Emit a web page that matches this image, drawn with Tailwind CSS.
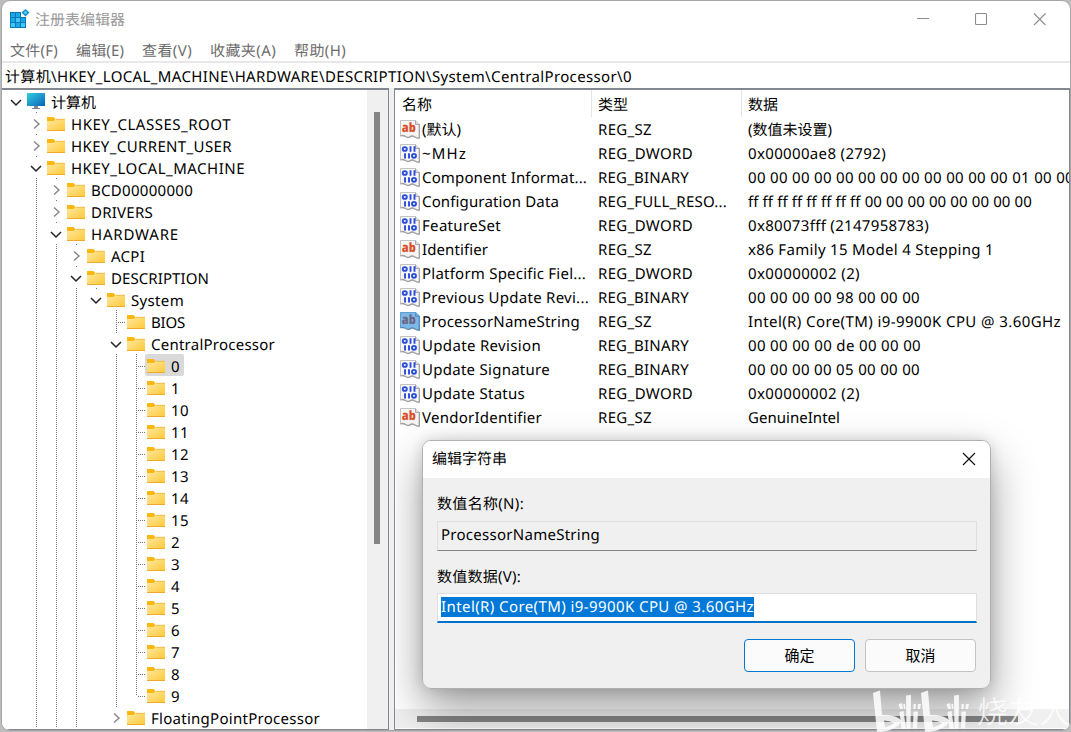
<!DOCTYPE html>
<html lang="zh-CN">
<head>
<meta charset="utf-8">
<title>注册表编辑器</title>
<script src="https://cdn.jsdelivr.net/npm/@tailwindcss/browser@4"></script>
</head>
<body class="w-[1071px] h-[732px] overflow-hidden bg-[#bcbcbd] font-['Noto_Sans','Noto_Sans_CJK_SC',sans-serif] text-[15px] leading-[22px] text-black [text-rendering:geometricPrecision]">
<svg class="absolute h-0 w-0">
  <defs>
    <linearGradient id="gf" x1="0" y1="0" x2="1" y2="1"><stop offset="0" stop-color="#ffe8a0"/><stop offset="1" stop-color="#ffc938"/></linearGradient>
    <linearGradient id="gm" x1="0" y1="0" x2="1" y2="1"><stop offset="0" stop-color="#32cfe0"/><stop offset="1" stop-color="#0b63b8"/></linearGradient>
  </defs>
  <symbol id="folder" viewBox="0 0 18 14"><path d="M0 0H6.500L8.500 2V4H0Z" fill="#fbb813"/><path d="M0 4H6.500L9 2H18V14H0Z" fill="url(#gf)"/><path d="M9 2.300H18" stroke="#edb53a" stroke-width=".8"/><path d="M0 13.500H18" stroke="#efac2c"/></symbol>
  <symbol id="page" viewBox="0 0 20 20"><path d="M.5 1.500H15.500L19.500 5.500V19.300Q16.500 19.500 14.500 17.800Q12 16 9.500 18.200Q7.500 19 5.500 17.500Q3 16 .5 16.800Z" fill="#f6f6f7" stroke="#c4c4c4"/><path d="M15.500 1.500V5.500H19.500" fill="#ddd" stroke="#aaa"/><path d="M19.300 5V19Q16.500 19.300 14.500 17.700Q12 16 9.500 18.200Q7.500 19 5.500 17.500Q3 16 .5 16.800" fill="none" stroke="#a2a2a2" stroke-width="1.300"/></symbol>
</svg>
<main class="relative ml-px flex h-[731px] w-[1070px] flex-col overflow-hidden rounded-[9px] border border-[#a6a6a6] bg-white">
  <header class="flex h-[36px] shrink-0 items-center pl-[8px]">
    <svg class="h-5 w-5" viewBox="0 0 20 20"><path d="M0 3H11V8H16V19H0Z" fill="#0879b9"/><g fill="#19a8e6"><path d="M1 4H5V8H1ZM6 4H10V8H6ZM1 9H5V13H1ZM11 9H15V13H11ZM6 14H10V18H6Z"/></g><g fill="#43c6f2"><path d="M6 9H10V13H6ZM1 14H5V18H1ZM11 14H15V18H11Z"/></g><path d="M15.500 0L19.500 3.500L15.500 7.500L11.500 3.500Z" fill="#1390cd"/><path d="M15.500 1.500L17.500 3.500L15.500 5.500L13.500 3.500Z" fill="#51c8f0"/></svg>
    <h1 class="mt-[2px] ml-[5px] text-[#999]">注册表编辑器</h1>
    <svg class="ml-auto mr-[22px] h-[14px] w-[132px]" viewBox="0 0 132 14" fill="none" stroke="#8c8c8c" stroke-width="1.100"><path d="M1 6.500H13"/><rect x="59.500" y="1.500" width="11" height="11" rx="1"/><path d="M118 1.500L129.500 13M129.500 1.500L118 13"/></svg>
  </header>
  <nav class="flex h-6 shrink-0 items-center gap-[18px] pt-[4px] pl-[8px] text-[#6d6d6d]">
    <span data-w="48">文件(F)</span><span data-w="48">编辑(E)</span><span data-w="50">查看(V)</span><span data-w="66">收藏夹(A)</span><span data-w="52">帮助(H)</span>
  </nav>
  <div class="flex h-[27px] shrink-0 items-center border-t-2 border-[#e8e8e8] pt-[2px] pl-[3px]"><span data-w="627">计算机\HKEY_LOCAL_MACHINE\HARDWARE\DESCRIPTION\System\CentralProcessor\0</span></div>
  <div class="flex min-h-0 flex-1 bg-[#f0f0f0]">
    <section class="flex w-[387px] shrink-0 overflow-hidden border-t-2 border-r border-b border-[#828790] bg-white">
      <div id="tree" class="h-[638px] w-[365px] overflow-hidden"></div>
      <div class="w-[21px] bg-[#f0f0f0] pt-[22px] pl-[7px]"><div class="h-[432px] w-[6px] bg-[#858585]"></div></div>
    </section>
    <section class="ml-[5px] flex min-w-0 flex-1 flex-col overflow-hidden border-t-2 border-r border-b border-l border-[#828790] bg-white">
      <div class="flex h-[27px] shrink-0 items-center">
        <div class="h-full w-[197px] border-r border-[#e5e5e5] pl-[7px] leading-[30px]">名称</div>
        <div class="h-full w-[150px] border-r border-[#e5e5e5] pl-[6px] leading-[30px]">类型</div>
        <div class="h-full pl-[6px] leading-[30px]">数据</div>
      </div>
      <div id="list" class="min-h-0 flex-1"></div>
      <div class="mb-[1px] h-[19px] shrink-0 bg-[#f0f0f0] pt-[7px] pl-[22px]"><div class="h-[6px] w-[601px] bg-[#858585]"></div></div>
    </section>
  </div>

  <div class="absolute left-[420px] top-[439px] z-10 flex h-[249px] w-[569px] flex-col overflow-hidden rounded-[9px] border border-[#b0b0b0] bg-[#f0f0f0]">
    <div class="flex h-[37px] shrink-0 items-center justify-between bg-white pr-[14px] pb-px pl-[9px]"><h2>编辑字符串</h2>
      <svg class="h-[14px] w-[14px]" viewBox="0 0 14 14" stroke="#111" stroke-width="1.200"><path d="M1 1L13 13M13 1L1 13"/></svg></div>
    <div class="flex flex-1 flex-col pr-[13px] pl-[14px]">
      <label class="mt-[15px] h-[22px] leading-[22px]"><span data-w="87">数值名称(N):</span></label>
      <div class="mt-[6px] flex h-[30px] items-center border border-b-[#868686] border-[#dfdfdf] pb-[2px] pl-[3px]"><span data-w="159">ProcessorNameString</span></div>
      <label class="mt-[15px] h-[22px] leading-[22px]"><span data-w="84">数值数据(V):</span></label>
      <div class="mt-[5px] flex h-[30px] items-center border border-b-2 border-b-[#0070c8] border-[#dfdfdf] bg-white pb-[2px] pl-[3px]"><span class="h-5 bg-[#0078d7] leading-5 text-white" data-w="313">Intel(R) Core(TM) i9-9900K CPU @ 3.60GHz</span></div>
      <div class="mt-[16px] mr-px flex justify-end gap-[10px]">
        <button class="h-[33px] w-[111px] rounded-[4px] border border-[#0078d4] bg-[#fbfbfb] pb-[2px]">确定</button>
        <button class="h-[33px] w-[111px] rounded-[4px] border border-[#c3c3c3] bg-[#fbfbfb] pb-[2px]">取消</button>
      </div>
    </div>
  </div>
  <div class="absolute left-[394px] top-[89px] h-[639px] w-[673px] overflow-hidden"><div class="absolute left-[26px] top-[350px] h-[249px] w-[569px] rounded-[9px] shadow-[0_20px_45px_rgba(0,0,0,0.38),0_0_14px_rgba(0,0,0,0.14)]"></div></div>
</main>
<div class="absolute left-[872px] top-[682px] z-20 flex h-[50px] w-[199px] overflow-hidden text-white/85">
  <svg class="h-[50px] w-[98px] shrink-0" viewBox="0 0 98 50" fill="currentColor">
    <g id="bili"><path fill-rule="evenodd" d="M1 11L8 8.500L10 33Q24 32 30 39Q25 48 9 50H5ZM12 38.500L13 45.500Q20 43 22 41Q18 38.500 12 38.500Z"/><path d="M26.500 22L30 21.300L31 27H28ZM34 13.500L39 13L38.500 47H34.500ZM31.300 22H33L33.500 27H32ZM41.500 22H44L43.500 27H41.500ZM46 22H49L48 27H45.500ZM27.500 30L31.500 29L34 47H29.500ZM41.500 29.500H46L45 46.500H41Z"/></g>
    <use href="#bili" x="48"/>
  </svg>
  <span class="ml-[7px] whitespace-nowrap text-[31px] font-light leading-[56px] font-['Noto_Sans_CJK_SC',sans-serif]">烧友人</span>
</div>
<script>
const tree = [[0,'计算机','o',45],[1,'HKEY_CLASSES_ROOT','c',160],[1,'HKEY_CURRENT_USER','c',161],[1,'HKEY_LOCAL_MACHINE','o',174],[2,'BCD00000000','c',102],[2,'DRIVERS','c',62],[2,'HARDWARE','o',88],[3,'ACPI','c',34],[3,'DESCRIPTION','o',98],[4,'System','o',53],[5,'BIOS','',34],[5,'CentralProcessor','o',124],
...['0','1','10','11','12','13','14','15','2','3','4','5','6','7','8','9'].map(n=>[6,n,'',n.length*9]),[5,'FloatingPointProcessor','c',169]];
const guideX = {1:34,2:54,3:74,5:114,6:134};
document.getElementById('tree').innerHTML = tree.map(([d,t,s,w],i)=>{
  const x = 14+20*d;
  let g='';
  for (let k=1;k<d;k++) if (guideX[k]) g += `<path d="M${guideX[k]+.5} 0V22"/>`;
  if (d) g += s ? `<path d="M${x+.5} 0V1"/>` : `<path d="M${x+.5} 0V${t==='9'?12:22}M${x+2} 12.5H${x+9}"/>`;
  const chev = s==='o' ? `<path d="M${x-5} 10L${x} 15L${x+5} 10" stroke="#222" stroke-width="1.500"/>` : s==='c' ? `<path d="M${x-2} 7.500L${x+3} 12L${x-2} 16.500" stroke="#8a8a8a" stroke-width="1.500"/>` : '';
  const icon = d ? '<svg class="mt-px h-[14px] w-[18px] shrink-0"><use href="#folder"/></svg>' : '<svg class="h-4 w-[18px] shrink-0" viewBox="0 0 18 16"><path d="M0 0H18V13H0Z" fill="url(#gm)"/><path d="M7 13H11V15H13V16H5V15H7Z" fill="#7e8790"/></svg>';
  return `<div class="flex h-[22px] items-center"><svg class="h-[22px] shrink-0" style="width:${x+9}px" fill="none"><g stroke="#777" stroke-dasharray="1 1">${g}</g>${chev}</svg><div class="flex h-[22px] items-center pl-[2px] pr-[4px] rounded-[2px] ${t==='0'?'bg-[#d9d9d9]':''}">${icon}<span class="mt-[4px] ml-[6px]" data-w="${w}">${t}</span></div></div>`;
}).join('');
const list = [['(默认)',39,'REG_SZ',54,'(数值未设置)',84,'s'],['~MHz',45,'REG_DWORD',95,'0x00000ae8 (2792)',138],['Component Informat...',165,'REG_BINARY',91,'00 00 00 00 00 00 00 00 00 00 00 00 01 00 00',326],['Configuration Data',137,'REG_FULL_RESO...',129,'ff ff ff ff ff ff ff ff 00 00 00 00 00 00 00 00',284],['FeatureSet',79,'REG_DWORD',95,'0x80073fff (2147958783)',181],['Identifier',66,'REG_SZ',54,'x86 Family 15 Model 4 Stepping 1',246,'s'],['Platform Specific Fiel...',164,'REG_DWORD',95,'0x00000002 (2)',112],['Previous Update Revi...',167,'REG_BINARY',91,'00 00 00 00 98 00 00 00',172],['ProcessorNameString',158,'REG_SZ',54,'Intel(R) Core(TM) i9-9900K CPU @ 3.60GHz',313,'x'],['Update Revision',119,'REG_BINARY',91,'00 00 00 00 de 00 00 00',173],['Update Signature',128,'REG_BINARY',91,'00 00 00 00 05 00 00 00',172],['Update Status',103,'REG_DWORD',95,'0x00000002 (2)',112],['VendorIdentifier',120,'REG_SZ',54,'GenuineIntel',92,'s']];
const icons = k => k ? `<text x="1.800" y="12.500" textLength="14" lengthAdjust="spacingAndGlyphs" class="font-['Open_Sans'] text-[13px] font-extrabold" fill="#d9522e">ab</text>${k==='x'?'<path d="M0 1H16L20 5V20Q16 19 14 18Q12 16 9 19Q6 18 5 17H0Z" fill="#0078d7" fill-opacity=".5"/>':''}`
 : '<g fill="none" stroke="#2b4bdb" stroke-width="1.900"><ellipse cx="4.800" cy="6" rx="2" ry="1.900"/><path d="M10.500 3.200V8.800M14.500 3.200V8.800M5 10.200V15.500M9 10.200V15.500"/><ellipse cx="14" cy="12.800" rx="2" ry="1.900"/></g>';
document.getElementById('list').innerHTML = list.map(r=>`<div class="flex h-6 items-center whitespace-nowrap"><svg class="ml-[5px] h-5 w-5 shrink-0" viewBox="0 0 20 20"><use href="#page"/>${icons(r[6]||'')}</svg><div class="mt-px w-[178px] shrink-0 pl-[2px]"><span data-w="${r[1]}">${r[0]}</span></div><div class="mt-px w-[150px] shrink-0"><span data-w="${r[3]}">${r[2]}</span></div><span class="mt-px" data-w="${r[5]}">${r[4]}</span></div>`).join('');
// Even out label widths with tracking
const ctx = document.createElement('canvas').getContext('2d');
ctx.font = '15px "Noto Sans","Noto Sans CJK SC",sans-serif';
ctx.textRendering = 'geometricPrecision';
document.querySelectorAll('[data-w]').forEach(e=>{
  e.style.whiteSpace='nowrap';
  e.style.letterSpacing=((+e.dataset.w-ctx.measureText(e.textContent).width)/e.textContent.length).toFixed(3)+'px';
});
</script>
</body>
</html>
